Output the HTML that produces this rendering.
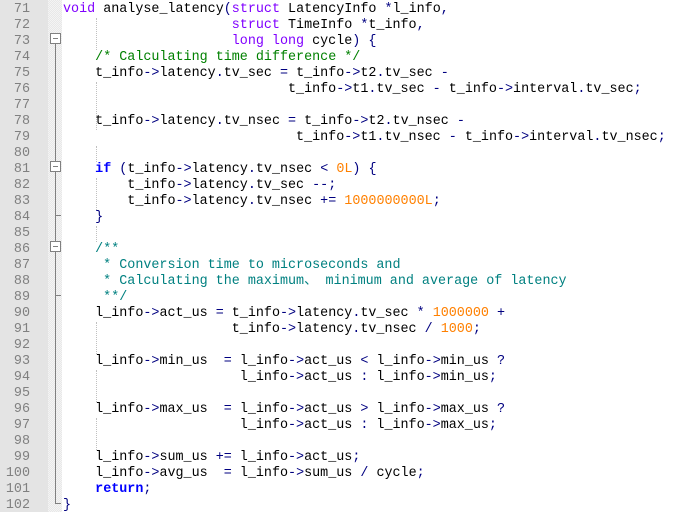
<!DOCTYPE html>
<html><head><meta charset="utf-8"><style>
body{margin:0;width:681px;height:512px;overflow:hidden;background:#fff;position:relative;font-family:"Liberation Mono","Noto Sans CJK SC",monospace;font-size:13.4px}
#gut{position:absolute;left:0;top:0;width:48px;height:512px;background:#e4e4e4}
#fold{position:absolute;left:48px;top:0;width:14px;height:512px;background-color:#f4f4f4;background-image:linear-gradient(45deg,#e8e8e8 25%,transparent 25%,transparent 75%,#e8e8e8 75%),linear-gradient(45deg,#e8e8e8 25%,transparent 25%,transparent 75%,#e8e8e8 75%);background-size:2px 2px;background-position:0 0,1px 1px}
#wrap{position:absolute;left:0;top:3px;width:681px;height:512px}
.n{position:absolute;left:0;width:30px;text-align:right;color:#808080;height:16px;line-height:16px}
.l{position:absolute;left:63px;white-space:pre;height:16px;line-height:16px;color:#000}
.k{color:#0000ff;font-weight:bold}.t{color:#8000ff}.o{color:#000080}.c{color:#008000}.d{color:#008080}.u{color:#ff8000}
.v{position:absolute;left:55px;width:1px;background:#808080}
.bx{position:absolute;left:50px;width:9px;height:9px;border:1px solid #808080;background:#fff;box-sizing:content-box}
.bx:after{content:"";position:absolute;left:2px;top:4px;width:5px;height:1px;background:#808080}
.tk{position:absolute;left:55px;width:6px;height:1px;background:#808080}
.g{position:absolute;width:0;border-left:1px dotted #c0c0c0;height:16px}
</style></head><body>
<div id="gut"></div><div id="fold"></div>
<div class="v" style="top:44px;height:460px"></div>
<div class="tk" style="top:503px"></div>
<div class="tk" style="top:215px"></div>
<div class="tk" style="top:295px"></div>
<div class="bx" style="top:33px"></div>
<div class="bx" style="top:161px"></div>
<div class="bx" style="top:241px"></div>
<div id="wrap">
<div class="g" style="left:96px;top:15px;height:32px"></div>
<div class="g" style="left:96px;top:79px;height:48px"></div>
<div class="g" style="left:96px;top:143px;height:16px"></div>
<div class="g" style="left:96px;top:175px;height:32px"></div>
<div class="g" style="left:96px;top:223px;height:16px"></div>
<div class="g" style="left:96px;top:319px;height:32px"></div>
<div class="g" style="left:96px;top:367px;height:32px"></div>
<div class="g" style="left:96px;top:415px;height:32px"></div>
<div class="n" style="top:-1px">71</div><div class="n" style="top:15px">72</div><div class="n" style="top:31px">73</div><div class="n" style="top:47px">74</div><div class="n" style="top:63px">75</div><div class="n" style="top:79px">76</div><div class="n" style="top:95px">77</div><div class="n" style="top:111px">78</div><div class="n" style="top:127px">79</div><div class="n" style="top:143px">80</div><div class="n" style="top:159px">81</div><div class="n" style="top:175px">82</div><div class="n" style="top:191px">83</div><div class="n" style="top:207px">84</div><div class="n" style="top:223px">85</div><div class="n" style="top:239px">86</div><div class="n" style="top:255px">87</div><div class="n" style="top:271px">88</div><div class="n" style="top:287px">89</div><div class="n" style="top:303px">90</div><div class="n" style="top:319px">91</div><div class="n" style="top:335px">92</div><div class="n" style="top:351px">93</div><div class="n" style="top:367px">94</div><div class="n" style="top:383px">95</div><div class="n" style="top:399px">96</div><div class="n" style="top:415px">97</div><div class="n" style="top:431px">98</div><div class="n" style="top:447px">99</div><div class="n" style="top:463px">100</div><div class="n" style="top:479px">101</div><div class="n" style="top:495px">102</div>

<div class="l" style="top:-1px"><span class="t">void</span> analyse_latency<span class="o">(</span><span class="t">struct</span> LatencyInfo <span class="o">*</span>l_info<span class="o">,</span></div>
<div class="l" style="top:15px">                     <span class="t">struct</span> TimeInfo <span class="o">*</span>t_info<span class="o">,</span></div>
<div class="l" style="top:31px">                     <span class="t">long long</span> cycle<span class="o">)</span> <span class="o">{</span></div>
<div class="l" style="top:47px">    <span class="c">/* Calculating time difference */</span></div>
<div class="l" style="top:63px">    t_info<span class="o">-&gt;</span>latency<span class="o">.</span>tv_sec <span class="o">=</span> t_info<span class="o">-&gt;</span>t2<span class="o">.</span>tv_sec <span class="o">-</span></div>
<div class="l" style="top:79px">                            t_info<span class="o">-&gt;</span>t1<span class="o">.</span>tv_sec <span class="o">-</span> t_info<span class="o">-&gt;</span>interval<span class="o">.</span>tv_sec<span class="o">;</span></div>
<div class="l" style="top:111px">    t_info<span class="o">-&gt;</span>latency<span class="o">.</span>tv_nsec <span class="o">=</span> t_info<span class="o">-&gt;</span>t2<span class="o">.</span>tv_nsec <span class="o">-</span></div>
<div class="l" style="top:127px">                             t_info<span class="o">-&gt;</span>t1<span class="o">.</span>tv_nsec <span class="o">-</span> t_info<span class="o">-&gt;</span>interval<span class="o">.</span>tv_nsec<span class="o">;</span></div>
<div class="l" style="top:159px">    <span class="k">if</span> <span class="o">(</span>t_info<span class="o">-&gt;</span>latency<span class="o">.</span>tv_nsec <span class="o">&lt;</span> <span class="u">0L</span><span class="o">)</span> <span class="o">{</span></div>
<div class="l" style="top:175px">        t_info<span class="o">-&gt;</span>latency<span class="o">.</span>tv_sec <span class="o">--;</span></div>
<div class="l" style="top:191px">        t_info<span class="o">-&gt;</span>latency<span class="o">.</span>tv_nsec <span class="o">+=</span> <span class="u">1000000000L</span><span class="o">;</span></div>
<div class="l" style="top:207px">    <span class="o">}</span></div>
<div class="l" style="top:239px">    <span class="d">/**</span></div>
<div class="l" style="top:255px"><span class="d">     * Conversion time to microseconds and</span></div>
<div class="l" style="top:271px"><span class="d">     * Calculating the maximum、 minimum and average of latency</span></div>
<div class="l" style="top:287px"><span class="d">     **/</span></div>
<div class="l" style="top:303px">    l_info<span class="o">-&gt;</span>act_us <span class="o">=</span> t_info<span class="o">-&gt;</span>latency<span class="o">.</span>tv_sec <span class="o">*</span> <span class="u">1000000</span> <span class="o">+</span></div>
<div class="l" style="top:319px">                     t_info<span class="o">-&gt;</span>latency<span class="o">.</span>tv_nsec <span class="o">/</span> <span class="u">1000</span><span class="o">;</span></div>
<div class="l" style="top:351px">    l_info<span class="o">-&gt;</span>min_us  <span class="o">=</span> l_info<span class="o">-&gt;</span>act_us <span class="o">&lt;</span> l_info<span class="o">-&gt;</span>min_us <span class="o">?</span></div>
<div class="l" style="top:367px">                      l_info<span class="o">-&gt;</span>act_us <span class="o">:</span> l_info<span class="o">-&gt;</span>min_us<span class="o">;</span></div>
<div class="l" style="top:399px">    l_info<span class="o">-&gt;</span>max_us  <span class="o">=</span> l_info<span class="o">-&gt;</span>act_us <span class="o">&gt;</span> l_info<span class="o">-&gt;</span>max_us <span class="o">?</span></div>
<div class="l" style="top:415px">                      l_info<span class="o">-&gt;</span>act_us <span class="o">:</span> l_info<span class="o">-&gt;</span>max_us<span class="o">;</span></div>
<div class="l" style="top:447px">    l_info<span class="o">-&gt;</span>sum_us <span class="o">+=</span> l_info<span class="o">-&gt;</span>act_us<span class="o">;</span></div>
<div class="l" style="top:463px">    l_info<span class="o">-&gt;</span>avg_us  <span class="o">=</span> l_info<span class="o">-&gt;</span>sum_us <span class="o">/</span> cycle<span class="o">;</span></div>
<div class="l" style="top:479px">    <span class="k">return</span><span class="o">;</span></div>
<div class="l" style="top:495px"><span class="o">}</span></div>
</div>
</body></html>
